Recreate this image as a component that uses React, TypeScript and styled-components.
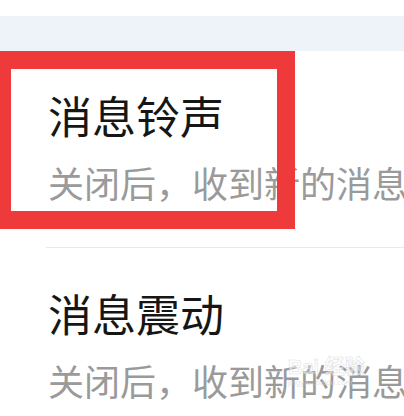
import React from "react";
import styled, { createGlobalStyle } from "styled-components";

const Global = createGlobalStyle`
  html, body { margin: 0; padding: 0; background: #ffffff; }
  body { width: 404px; height: 416px; overflow: hidden; }
  * { box-sizing: border-box; }
`;

const Page = styled.div`
  position: relative;
  width: 404px;
  height: 416px;
  overflow: hidden;
  background: #ffffff;
  font-family: "Noto Sans CJK SC", "Noto Sans", sans-serif;
  padding-top: 16px;
`;

const Band = styled.div`
  height: 35px;
  background: #eef2f9;
`;

const Item = styled.div<{ $top: number; $bottom: number }>`
  padding: ${(p) => p.$top}px 0 ${(p) => p.$bottom}px 48px;
  white-space: nowrap;
  overflow: hidden;
`;

const Title = styled.div`
  font-size: 44px;
  line-height: 50px;
  color: #161616;
`;

const Sub = styled.div`
  margin-top: 20px;
  font-size: 36px;
  line-height: 44px;
  color: #9a9a9a;
`;

const Divider = styled.div`
  height: 1px;
  margin-left: 46px;
  background: #e9e9e9;
`;

const Highlight = styled.div`
  position: absolute;
  left: -7px;
  top: 51px;
  width: 302px;
  height: 178px;
  border: 18px solid #ee3a3a;
  pointer-events: none;
`;

const Watermark = styled.div`
  position: absolute;
  left: 288px;
  top: 356px;
  display: flex;
  flex-direction: column;
  align-items: flex-start;
  color: rgba(255, 255, 255, 0.55);
  font-family: "Liberation Sans", "Noto Sans CJK SC", sans-serif;
  pointer-events: none;
`;

const MarkMain = styled.div`
  font-size: 20px;
  font-weight: bold;
  line-height: 22px;
  -webkit-text-stroke: 0.6px rgba(200, 200, 200, 0.6);
`;

const MarkSub = styled.div`
  font-size: 8px;
  line-height: 10px;
  color: rgba(210, 210, 210, 0.6);
`;

export default function App() {
  return (
    <>
      <Global />
      <Page>
        <Band />
        <Item $top={39} $bottom={43}>
          <Title>消息铃声</Title>
          <Sub>关闭后，收到新的消息</Sub>
        </Item>
        <Divider />
        <Item $top={40} $bottom={20}>
          <Title>消息震动</Title>
          <Sub>关闭后，收到新的消息</Sub>
        </Item>
        <Highlight />
        <Watermark>
          <MarkMain>Bai 经验</MarkMain>
          <MarkSub>jingyan.baidu.com</MarkSub>
        </Watermark>
      </Page>
    </>
  );
}
